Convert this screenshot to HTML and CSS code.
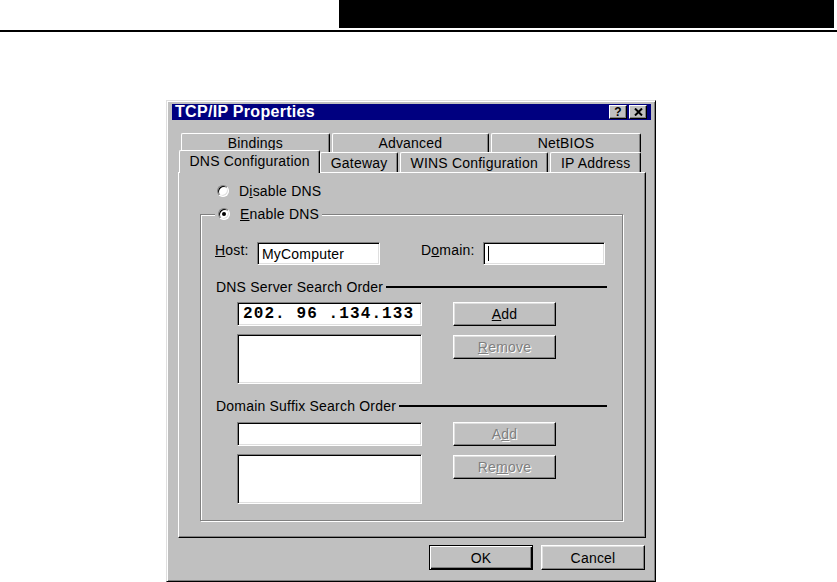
FILE: index.html
```html
<!DOCTYPE html>
<html lang="en">
<head>
  <meta charset="UTF-8" />
  <title>TCP/IP Properties</title>
  <link rel="stylesheet" href="styles.css">
</head>
<body>

<!-- page header -->
<div class="page-head"><div class="head-bar"></div></div>
<div class="head-rule"></div>

<div class="stage">
  <div class="dialog">
    <div class="titlebar">
      <span class="title">TCP/IP Properties</span>
      <span class="cap-btn cap-help">?</span>
      <span class="cap-btn">
        <svg width="9" height="8" viewBox="0 0 9 8"><path d="M1 0.5 L8 7.5 M8 0.5 L1 7.5" stroke="#000" stroke-width="2"/></svg>
      </span>
    </div>

    <div class="tabs">
      <div class="tab-row tab-row-back">
        <div class="tab">Bindings</div>
        <div class="tab">Advanced</div>
        <div class="tab">NetBIOS</div>
      </div>
      <div class="tab-row tab-row-front">
        <div class="tab tab-active">DNS Configuration</div>
        <div class="tab">Gateway</div>
        <div class="tab">WINS Configuration</div>
        <div class="tab">IP Address</div>
      </div>
    </div>

    <div class="panel">
      <div class="radio-row">
        <span class="radio"></span>
        <span>D<u>i</u>sable DNS</span>
      </div>

      <div class="group">
        <div class="group-title radio-row">
          <span class="radio radio-on"></span>
          <span><u>E</u>nable DNS</span>
        </div>

        <div class="host-row">
          <span class="field-label label-host"><u>H</u>ost:</span>
          <div class="field field-host">MyComputer</div>
          <span class="field-label label-domain">D<u>o</u>main:</span>
          <div class="field field-domain"><span class="caret"></span></div>
        </div>

        <div class="heading"><span>DNS Server Search Order</span><span class="heading-line"></span></div>
        <div class="list-block">
          <div class="list-col">
            <div class="field field-ip">202. 96 .134.133</div>
            <div class="field listbox"></div>
          </div>
          <div class="btn-col">
            <button class="btn"><u>A</u>dd</button>
            <button class="btn" disabled><u>R</u>emove</button>
          </div>
        </div>

        <div class="heading heading-second"><span>Domain Suffix Search Order</span><span class="heading-line"></span></div>
        <div class="list-block list-block-second">
          <div class="list-col">
            <div class="field field-line"></div>
            <div class="field listbox"></div>
          </div>
          <div class="btn-col">
            <button class="btn" disabled>A<u>d</u>d</button>
            <button class="btn" disabled>Re<u>m</u>ove</button>
          </div>
        </div>
      </div>
    </div>

    <div class="dialog-actions">
      <button class="btn btn-default">OK</button>
      <button class="btn">Cancel</button>
    </div>
  </div>
</div>

</body>
</html>
```

FILE: styles.css
```css
* { box-sizing: border-box; }
body {
  margin: 0;
  background: #fff;
  color: #000;
  font-family: "Liberation Sans", Arial, sans-serif;
  font-size: 14px;
  letter-spacing: 0.2px;
}

/* Page header */
.page-head {
  height: 28px;
  display: flex;
}
.head-bar {
  margin-left: 339px;
  width: 495px;
  background: #000;
}
.head-rule {
  margin-top: 2px;
  height: 2px;
  background: #000;
}

.stage {
  padding: 68px 0 0 166px;
}

/* Window */
.dialog {
  width: 490px;
  height: 482px;
  background: #c0c0c0;
  border: 1px solid;
  border-color: #dfdfdf #000 #000 #dfdfdf;
  box-shadow: inset 1px 1px #fff, inset -1px -1px #808080;
  padding: 3px 4px 3px 5px;
}

.titlebar {
  height: 16px;
  background: #000080;
  color: #fff;
  display: flex;
  align-items: center;
  gap: 2px;
  padding: 0 4px 0 3px;
}
.title {
  flex: 1;
  font-weight: bold;
  font-size: 16px;
  letter-spacing: 0.3px;
  line-height: 16px;
}
.cap-btn {
  width: 18px;
  height: 14px;
  background: #c0c0c0;
  color: #000;
  border: 1px solid;
  border-color: #fff #000 #000 #fff;
  box-shadow: inset -1px -1px #808080;
  display: flex;
  align-items: center;
  justify-content: center;
}
.cap-help {
  font-weight: bold;
  font-size: 12px;
  line-height: 12px;
}

/* Tabs */
.tabs {
  margin: 13px 0 0 9px;
  width: 460px;
}
.tab-row {
  display: flex;
  gap: 2px;
}
.tab-row-back { height: 19px; }
.tab-row-front { height: 20px; }
.tab {
  flex: 1 1 auto;
  padding: 0 6px;
  display: flex;
  align-items: center;
  justify-content: center;
  white-space: nowrap;
  background: #c0c0c0;
  border-top: 1px solid #fff;
  border-left: 1px solid #fff;
  border-right: 1px solid #000;
  border-radius: 2px 2px 0 0;
  box-shadow: inset -1px 0 #808080;
}
.tab-active {
  height: 23px;
  margin: -2px -2px -1px;
  padding-bottom: 3px;
  position: relative;
  z-index: 1;
}

.panel {
  margin-left: 6px;
  width: 468px;
  height: 366px;
  border: 1px solid;
  border-color: #fff #000 #000 #fff;
  box-shadow: inset -1px -1px #808080;
  padding-top: 9px;
}

/* Radio buttons */
.radio-row {
  display: flex;
  align-items: center;
  gap: 10px;
  height: 17px;
  margin-left: 38px;
}
.radio {
  width: 12px;
  height: 12px;
  border-radius: 50%;
  background: #fff;
  border: 1px solid;
  border-color: #808080 #fff #fff #808080;
  box-shadow: inset 1px 1px #000, inset -1px -1px #dfdfdf;
  display: flex;
  align-items: center;
  justify-content: center;
}
.radio-on::after {
  content: "";
  width: 4px;
  height: 4px;
  border-radius: 50%;
  background: #000;
}
u { text-underline-offset: 1px; }

/* Group box */
.group {
  margin: 15px 0 0 21px;
  width: 423px;
  border: 1px solid #808080;
  box-shadow: inset 1px 1px #fff, 1px 1px #fff;
  padding: 0 15px 16px 14px;
}
.group-title {
  margin: -9px 0 0;
  width: fit-content;
  height: 16px;
  padding: 0 3px;
  background: #c0c0c0;
}

.host-row {
  margin-top: 20px;
  display: flex;
  align-items: flex-start;
  height: 23px;
}
.field-label {
  line-height: 16px;
}
.label-host { width: 42px; }
.label-domain { width: 62px; margin-left: 41px; }

.field {
  background: #fff;
  border: 1px solid;
  border-color: #808080 #fff #fff #808080;
  box-shadow: inset 1px 1px #000, inset -1px -1px #dfdfdf;
  padding: 0 4px;
  display: flex;
  align-items: center;
}
.field-host { width: 123px; height: 23px; }
.field-domain { width: 122px; height: 23px; }
.caret {
  width: 1px;
  height: 15px;
  background: #000;
}

.heading {
  margin-top: 14px;
  height: 16px;
  display: flex;
  align-items: center;
  padding-left: 1px;
}
.heading-line {
  flex: 1;
  height: 2px;
  margin-left: 3px;
  background: #000;
}

.list-block {
  margin-top: 7px;
  padding-left: 22px;
  display: flex;
  gap: 31px;
}
.list-block-second { margin-top: 8px; }
.list-col {
  width: 185px;
  display: flex;
  flex-direction: column;
  gap: 8px;
}
.field-ip {
  height: 24px;
  padding-left: 5px;
  white-space: pre;
  overflow: hidden;
  font-family: "Liberation Mono", "Courier New", monospace;
  font-weight: bold;
  font-size: 16px;
  letter-spacing: 1.1px;
}
.field-line { height: 24px; }
.listbox { height: 50px; }

.btn-col {
  display: flex;
  flex-direction: column;
  gap: 9px;
}

/* Buttons */
.btn {
  width: 103px;
  height: 24px;
  padding: 0;
  background: #c0c0c0;
  color: #000;
  font: inherit;
  letter-spacing: inherit;
  border: 1px solid;
  border-color: #fff #000 #000 #fff;
  box-shadow: inset -1px -1px #808080, inset 1px 1px #dfdfdf;
}
.btn:disabled {
  color: #808080;
  text-shadow: 1px 1px 0 #fff;
}
.btn-default {
  border-color: #000;
  box-shadow: inset 1px 1px #fff, inset -1px -1px #000, inset -2px -2px #808080;
}

.dialog-actions {
  margin-top: 7px;
  display: flex;
  justify-content: flex-end;
  gap: 8px;
  padding-right: 6px;
}
.dialog-actions .btn {
  width: 104px;
  height: 25px;
}
```
